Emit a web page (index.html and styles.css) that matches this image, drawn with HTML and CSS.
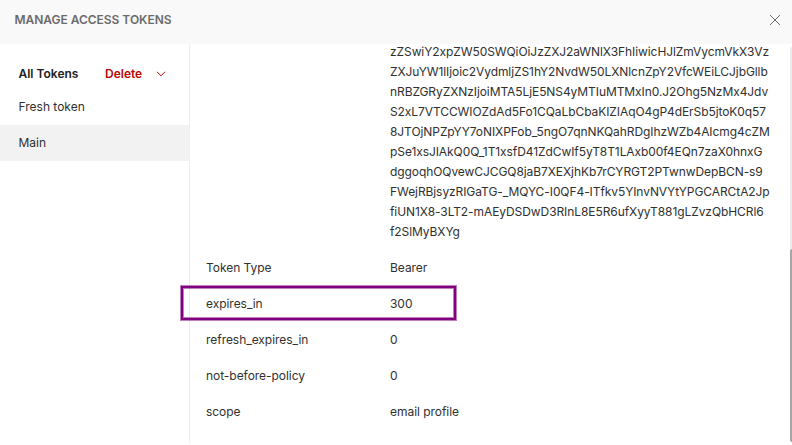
FILE: index.html
```html
<!DOCTYPE html>
<html lang="en">
<head>
<meta charset="utf-8">
<title>Manage Access Tokens</title>
<link rel="stylesheet" href="styles.css">
</head>
<body>
<div class="modal">
  <header class="header">
    <h1 class="title">MANAGE ACCESS TOKENS</h1>
    <svg class="close" width="12" height="12" viewBox="0 0 12 12"><path d="M1 1l10 10M11 1L1 11"/></svg>
  </header>
  <div class="body">
    <aside class="sidebar">
      <div class="toolbar">
        <span class="all">All Tokens</span>
        <span class="delete">Delete</span>
        <svg class="chevron" width="10" height="6" viewBox="0 0 10 6"><path d="M1 .8l4 4 4-4"/></svg>
      </div>
      <div class="item">Fresh token</div>
      <div class="item selected">Main</div>
    </aside>
    <main class="details">
      <div class="token">zZSwiY2xpZW50SWQiOiJzZXJ2aWNlX3FhIiwicHJlZmVycmVkX3Vz<br>ZXJuYW1lIjoic2VydmljZS1hY2NvdW50LXNlcnZpY2VfcWEiLCJjbGllb<br>nRBZGRyZXNzIjoiMTA5LjE5NS4yMTIuMTMxIn0.J2Ohg5NzMx4Jdv<br>S2xL7VTCCWIOZdAd5Fo1CQaLbCbaKIZIAqO4gP4dErSb5jtoK0q57<br>8JTOjNPZpYY7oNIXPFob_5ngO7qnNKQahRDgIhzWZb4AIcmg4cZM<br>pSe1xsJIAkQ0Q_1T1xsfD41ZdCwIf5yT8T1LAxb00f4EQn7zaX0hnxG<br>dggoqhOQvewCJCGQ8jaB7XEXjhKb7rCYRGT2PTwnwDepBCN-s9<br>FWejRBjsyzRIGaTG-_MQYC-I0QF4-ITfkv5YInvNVYtYPGCARCtA2Jp<br>fiUN1X8-3LT2-mAEyDSDwD3RInL8E5R6ufXyyT881gLZvzQbHCRl6<br>f2SlMyBXYg</div>
      <div class="row"><span class="key">Token Type</span><span>Bearer</span></div>
      <div class="row marked"><span class="key">expires_in</span><span>300</span></div>
      <div class="row"><span class="key">refresh_expires_in</span><span>0</span></div>
      <div class="row"><span class="key">not-before-policy</span><span>0</span></div>
      <div class="row"><span class="key">scope</span><span>email profile</span></div>
    </main>
    <div class="scrollbar"><div class="thumb"></div></div>
  </div>
</div>
</body>
</html>
```
FILE: styles.css
```css
body {
  margin: 0;
  background: #fff;
  color: #303030;
  font: 400 12px/20px Inter, sans-serif;
}
.modal {
  display: flex;
  flex-direction: column;
  height: 445px;
  overflow: hidden;
}
.header {
  display: flex;
  flex: none;
  align-items: center;
  justify-content: space-between;
  box-sizing: border-box;
  height: 44px;
  padding: 0 11px 4px 14.5px;
  background: #f9f9f9;
}
.title {
  margin: 0;
  color: #6b6b6b;
  font-size: 12px;
  font-weight: 600;
  letter-spacing: -0.03px;
}
.close, .chevron {
  fill: none;
  stroke: #6b6b6b;
  stroke-width: 1;
}
.chevron {
  margin-left: 14px;
  stroke: #b70700;
}
.body {
  display: flex;
  flex: 1;
  min-height: 0;
}
.sidebar {
  box-sizing: border-box;
  width: 190px;
  height: 399px;
  padding-top: 15px;
  border-right: 1px solid #ededed;
}
.toolbar {
  display: flex;
  align-items: center;
  height: 30px;
  padding-left: 18.5px;
  font-weight: 600;
}
.all {
  width: 86.5px;
  color: #212121;
}
.delete {
  color: #b70700;
}
.item {
  height: 36px;
  padding-left: 18.5px;
  line-height: 36px;
}
.selected {
  background: #f2f2f2;
}
.details {
  flex: 1;
  padding-left: 16px;
}
.token {
  height: 208px;
  margin: -2px 0 0 184px;
  letter-spacing: -0.08px;
  white-space: nowrap;
}
.row {
  position: relative;
  display: flex;
  height: 36px;
  padding-top: 2px;
  box-sizing: border-box;
  letter-spacing: -0.04px;
  line-height: 32px;
}
.key {
  width: 184px;
}
.marked::before {
  content: "";
  position: absolute;
  top: 0;
  left: -25px;
  box-sizing: border-box;
  width: 275px;
  height: 34px;
  border: 2px solid #800080;
  box-shadow: 0 0 0 1px rgba(128, 0, 128, .5), inset 0 0 0 1px rgba(128, 0, 128, .5);
}
.scrollbar {
  display: flex;
  align-items: flex-end;
  width: 2px;
  height: 395px;
  margin-top: 3px;
  background: #ececec;
  border-top-left-radius: 2px;
}
.thumb {
  width: 2px;
  height: 193px;
  background: #a6a6a6;
  border-radius: 2px 0 0 2px;
}
```
